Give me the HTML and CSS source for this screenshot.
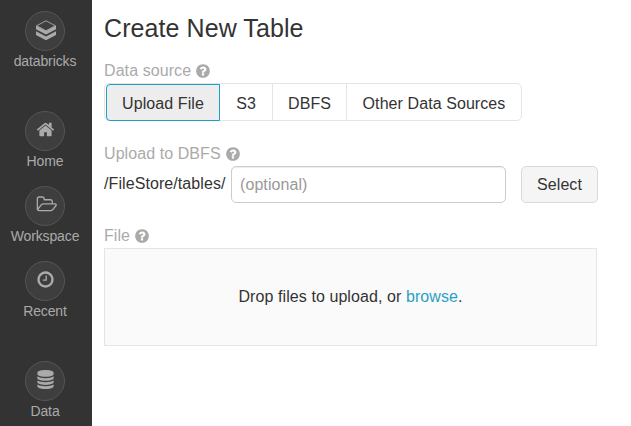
FILE: index.html
```html
<!DOCTYPE html>
<html lang="en">
<head>
<meta charset="utf-8">
<title>Create New Table</title>
<link rel="stylesheet" href="styles.css">
</head>
<body>
<svg class="defs" aria-hidden="true">
  <symbol id="help" viewBox="0 0 1792 1792"><path d="M1024 1376v-192q0-14-9-23t-23-9h-192q-14 0-23 9t-9 23v192q0 14 9 23t23 9h192q14 0 23-9t9-23zm256-672q0-88-55.500-163t-138.500-116-170-41q-243 0-371 213-15 24 8 42l132 100q7 6 19 6 16 0 25-12 53-68 86-92 34-24 86-24 48 0 85.500 26t37.500 59q0 38-20 61t-68 45q-63 28-115.500 86.500t-52.500 125.500v36q0 14 9 23t23 9h192q14 0 23-9t9-23q0-19 21.500-49.500t54.500-49.500q32-18 49-28.500t46-35 44.500-48 28-60.500 12.500-81zm384 192q0 209-103 385.500t-279.500 279.500-385.500 103-385.500-103-279.500-279.500-103-385.500 103-385.500 279.500-279.500 385.500-103 385.500 103 279.500 279.500 103 385.500z"/></symbol>
</svg>
<div class="app">
  <nav class="sidebar">
    <a class="item brand"><span class="circle"><svg class="logo" viewBox="0 0 20 20"><path class="logo-top" d="M.7 5.700 10 .8 19.300 5.700 10 10.800z"/><path d="M0 5.600 10 11 20 5.600V9.200L10 14.600 0 9.200zM0 11.300 10 16.500 20 11.300V15L10 20.300 0 15z"/></svg></span><span>databricks</span></a>
    <a class="item"><span class="circle"><svg class="icon" viewBox="0 0 1792 1792"><path d="M1472 992v480q0 26-19 45t-45 19h-384v-384h-256v384h-384q-26 0-45-19t-19-45v-480q0-1 .5-3t.5-3l575-474 575 474q1 2 1 6zm223-69l-62 74q-8 9-21 11h-3q-13 0-21-7l-692-577-692 577q-12 8-24 7-13-2-21-11l-62-74q-8-10-7-23.500t11-21.500l719-599q32-26 76-26t76 26l244 204v-195q0-14 9-23t23-9h192q14 0 23 9t9 23v408l219 182q10 8 11 21.500t-7 23.500z"/></svg></span><span>Home</span></a>
    <a class="item"><span class="circle"><svg class="icon wide" viewBox="0 0 2048 1792"><path d="M1845 931q0-35-53-35h-1088q-40 0-85.500 21.500t-71.500 52.500l-294 363q-18 24-18 40 0 35 53 35h1088q40 0 86-22t71-53l294-363q18-22 18-39zm-1141-163h768v-160q0-40-28-68t-68-28h-576q-40 0-68-28t-28-68v-64q0-40-28-68t-68-28h-320q-40 0-68 28t-28 68v853l256-315q44-53 116-87.500t140-34.500zm1269 163q0 62-46 120l-295 363q-43 53-116 87.500t-140 34.500h-1088q-92 0-158-66t-66-158v-960q0-92 66-158t158-66h320q92 0 158 66t66 158v32h544q92 0 158 66t66 158v160h192q54 0 99 24.500t67 70.500q15 32 15 68z"/></svg></span><span>Workspace</span></a>
    <a class="item group-end"><span class="circle"><svg class="icon" viewBox="0 0 1792 1792"><path d="M1024 544v448q0 14-9 23t-23 9h-320q-14 0-23-9t-9-23v-64q0-14 9-23t23-9h224v-352q0-14 9-23t23-9h64q14 0 23 9t9 23zm416 352q0-148-73-273t-198-198-273-73-273 73-198 198-73 273 73 273 198 198 273 73 273-73 198-198 73-273zm224 0q0 209-103 385.500t-279.500 279.500-385.500 103-385.500-103-279.500-279.500-103-385.500 103-385.500 279.500-279.500 385.500-103 385.500 103 279.500 279.500 103 385.500z"/></svg></span><span>Recent</span></a>
    <a class="item"><span class="circle"><svg class="icon" viewBox="0 0 1792 1792"><path d="M896 768q237 0 443-43t325-127v170q0 69-103 128t-280 93.500-385 34.500-385-34.500-280-93.500-103-128v-170q119 84 325 127t443 43zm0 768q237 0 443-43t325-127v170q0 69-103 128t-280 93.500-385 34.500-385-34.500-280-93.500-103-128v-170q119 84 325 127t443 43zm0-384q237 0 443-43t325-127v170q0 69-103 128t-280 93.500-385 34.500-385-34.500-280-93.500-103-128v-170q119 84 325 127t443 43zm0-1152q208 0 385 34.500t280 93.500 103 128v128q0 69-103 128t-280 93.500-385 34.500-385-34.500-280-93.500-103-128v-128q0-69 103-128t280-93.500 385-34.500z"/></svg></span><span>Data</span></a>
  </nav>
  <main class="content">
    <h1>Create New Table</h1>
    <div class="label">Data source <svg class="help"><use href="#help"/></svg></div>
    <div class="tabs">
      <button class="tab active">Upload File</button>
      <button class="tab s3">S3</button>
      <button class="tab dbfs">DBFS</button>
      <button class="tab other">Other Data Sources</button>
    </div>
    <div class="label upload-label">Upload to DBFS <svg class="help"><use href="#help"/></svg></div>
    <div class="path-row">
      <span class="prefix">/FileStore/tables/</span>
      <input class="path" type="text" placeholder="(optional)">
      <button class="select">Select</button>
    </div>
    <div class="label file-label">File <svg class="help"><use href="#help"/></svg></div>
    <div class="drop"><span>Drop files to upload, or <a class="browse">browse</a>.</span></div>
  </main>
</div>
</body>
</html>
```

FILE: styles.css
```css
* { box-sizing: border-box; }
body {
  margin: 0;
  overflow: hidden;
  background: #fff;
  color: #333;
  font: 16px/20px "Liberation Sans", Arial, sans-serif;
}
button, input { margin: 0; font: inherit; color: inherit; letter-spacing: inherit; }
.defs { display: none; }
.app { display: flex; height: 426px; }

.sidebar {
  flex: none;
  width: 92px;
  padding: 11px 2px 0 0;
  overflow: hidden;
  background: #333;
  color: #aaa;
  font-size: 14px;
  letter-spacing: -.12px;
}
.item {
  display: flex;
  flex-direction: column;
  align-items: center;
  height: 75px;
}
.brand, .group-end { margin-bottom: 25px; }
.circle {
  display: flex;
  flex: none;
  justify-content: center;
  width: 40px;
  height: 40px;
  padding-top: 8px;
  border: 1px solid #555;
  border-radius: 50%;
  background: #3e3e3e;
}
.icon { flex: none; width: 19px; height: 19px; margin-left: 1px; fill: #aaa; }
.wide { width: 21.700px; margin-left: 3px; }
.logo { flex: none; width: 20px; height: 20px; margin-left: 2px; fill: #aaa; overflow: visible; }
.logo-top { fill: none; stroke: #aaa; stroke-width: .9; }

.content { flex: 1; padding: 13px 0 0 12px; letter-spacing: .08px; }
h1 { margin: 0; font-size: 25px; font-weight: 400; line-height: 30px; }
.label { display: flex; align-items: center; gap: 4px; height: 20px; margin-top: 18px; color: #aaa; }
.help { width: 16px; height: 16px; fill: #aaa; }
.tabs {
  display: flex;
  width: 418px;
  height: 38px;
  margin-top: 2px;
  padding-left: 1px;
  border: 1px solid #e5e5e5;
  border-radius: 5px;
}
.tab { padding: 3px 0 0; border: 0; border-right: 1px solid #e5e5e5; background: none; height: 36px; }
.active {
  width: 114px;
  height: 37px;
  border: 1px solid #1b9fc2;
  border-radius: 4px 0 0 4px;
  background: #ededed;
}
.s3 { width: 53px; }
.dbfs { width: 74px; }
.other { flex: 1; border-right: 0; }
.upload-label { margin-top: 23px; }
.path-row { display: flex; height: 37px; margin-top: 2px; }
.prefix { width: 127px; padding-top: 8px; }
.path {
  width: 275px;
  padding: 0 8px;
  border: 1px solid #ccc;
  border-radius: 5px;
  background: #fff;
  box-shadow: inset 0 1px 1px rgba(0, 0, 0, .075);
}
.path::placeholder { color: #999; opacity: 1; }
.select {
  width: 77px;
  margin-left: 15px;
  padding: 0;
  border: 1px solid #d9d9d9;
  border-radius: 5px;
  background: #f5f5f5;
}
.file-label { margin-top: 23px; }
.drop {
  display: flex;
  align-items: center;
  justify-content: center;
  width: 493px;
  height: 98px;
  margin-top: 2px;
  border: 1px solid #e5e5e5;
  background: #fafafa;
}
.browse { color: #2b9fc7; }
```
